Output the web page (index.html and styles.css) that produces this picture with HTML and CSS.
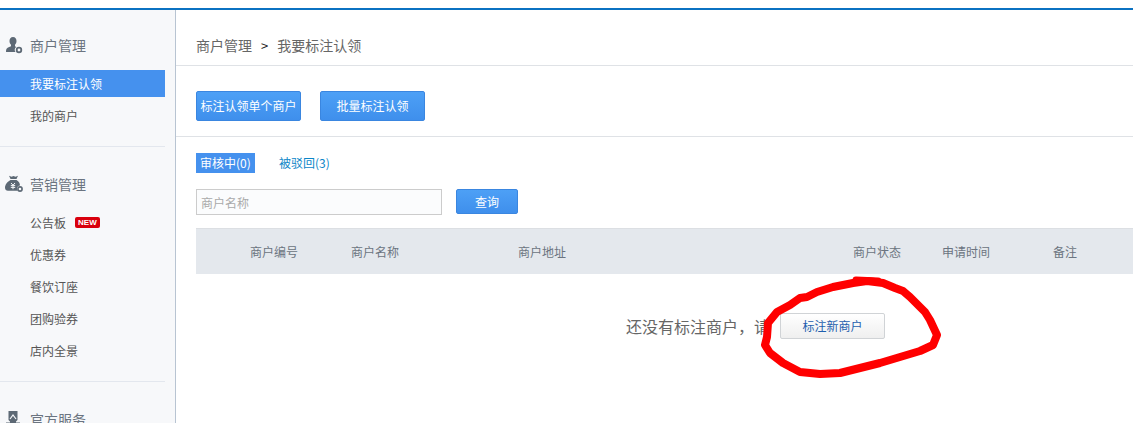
FILE: index.html
```html
<!DOCTYPE html>
<html lang="zh-CN">
<head>
  <meta charset="UTF-8" />
  <title>我要标注认领</title>
  <link rel="stylesheet" href="styles.css">
</head>
<body>

<div class="page">
  <div class="sidebar">
    <div class="side-group">
      <div class="side-title">
        <svg class="side-icon" viewBox="0 0 18 18"><path d="M8 1c2.300 0 3.500 1.700 3.500 4 0 1.700-.7 3-1.500 3.800v1.400l1.200.7a3.500 3.500 0 0 0-.7 5.100H1c0-2.500.5-3.700 2-4.400l3-1.400V8.800C5.200 8 4.500 6.700 4.500 5 4.500 2.700 5.700 1 8 1z"/><circle cx="14" cy="14" r="2.300" fill="none" stroke="#5d6975" stroke-width="1.800"/></svg>
        商户管理
      </div>
      <a class="side-item active">我要标注认领</a>
      <a class="side-item">我的商户</a>
    </div>
    <div class="side-group">
      <div class="side-title">
        <svg class="side-icon" viewBox="0 0 18 18"><path d="M4 .8l2.500 1 2-.8 2 .8 2.500-1-1.500 3.200H5.500zM5.500 5h6c2.500 1.500 3.500 3.500 3.500 5.500-1.600 0-3 1.400-3 3 0 .9.300 1.600.9 2.300H3c-1.700 0-3-1.100-3-3 0-3.300 2.500-6.300 5.500-7.800z"/><circle cx="15" cy="14" r="2.100" fill="none" stroke="#5d6975" stroke-width="1.600"/><path d="M6 8l2 2.200L10 8M5.800 10.600h4.400M5.800 12.400h4.400M8 10.200v4" fill="none" stroke="#f7f8fa" stroke-width="1"/></svg>
        营销管理
      </div>
      <a class="side-item">公告板<span class="new-tag">NEW</span></a>
      <a class="side-item">优惠券</a>
      <a class="side-item">餐饮订座</a>
      <a class="side-item">团购验券</a>
      <a class="side-item">店内全景</a>
    </div>
    <div class="side-group">
      <div class="side-title">
        <svg class="side-icon" viewBox="0 0 18 18"><path d="M3.500 1h9v9l-1.500 1.500v1h4V16H1v-3.500h4v-1L3.500 10z"/><path d="M5 9l3-4 3 4" fill="none" stroke="#f7f8fa" stroke-width="1.200"/></svg>
        官方服务
      </div>
    </div>
  </div>

  <div class="main">
    <div class="crumb">
      <span>商户管理</span><span class="crumb-sep">&gt;</span><span>我要标注认领</span>
    </div>
    <div class="toolbar">
      <a class="btn-blue">标注认领单个商户</a>
      <a class="btn-blue">批量标注认领</a>
    </div>
    <div class="body-area">
      <div class="tabs">
        <a class="tab current">审核中(0)</a>
        <a class="tab">被驳回(3)</a>
      </div>
      <div class="search-row">
        <input class="search-input" type="text" placeholder="商户名称">
        <a class="btn-query">查询</a>
      </div>
      <div class="table-head">
        <span>商户编号</span>
        <span>商户名称</span>
        <span>商户地址</span>
        <span>商户状态</span>
        <span>申请时间</span>
        <span>备注</span>
      </div>
      <div class="empty">
        <span class="empty-text">还没有标注商户<span class="punct">，</span>请</span>
        <a class="btn-new">标注新商户</a>
      </div>
    </div>
  </div>
</div>

<!-- hand-drawn marker over the screenshot -->
<svg class="scribble" viewBox="0 0 1133 423">
  <path d="M767 337L768 323L777 312L790 305L800 298L807 297L817 292L833 287L853 283L867 281L883 283L895 288L903 291L910 297L920 307L925 312L930 320L937 335L933 345L920 351L900 357L880 363L860 368L840 373L820 374L800 372L783 363L770 353L765 345z"/>
  <path class="scribble-thick" d="M856 280L878 281"/>
</svg>

</body>
</html>
```

FILE: styles.css
```css
html, body {
  margin: 0;
  padding: 0;
  height: 423px;
  overflow: hidden;
  background: #fff;
  font-family: "Noto Sans CJK SC", "Liberation Sans", sans-serif;
  font-size: 12px;
  color: #555;
}
.page {
  display: flex;
  margin-top: 8px;
  border-top: 2px solid #0b72c2;
  height: 413px;
}
.sidebar {
  flex: none;
  width: 175px;
  box-sizing: content-box;
  background: #f7f8fa;
  border-right: 1px solid #b8c4d2;
  overflow: hidden;
}
.side-group {
  width: 165px;
  padding: 22px 0 14px;
  border-bottom: 1px solid #e3e7ee;
}
.side-group:first-child {
  padding-top: 20px;
}
.side-group:last-child {
  border-bottom: none;
}
.side-title {
  box-sizing: border-box;
  display: flex;
  align-items: center;
  height: 32px;
  margin-bottom: 6px;
  padding: 0 0 2px 5px;
  font-size: 14px;
  color: #6b7480;
}
.side-icon {
  width: 18px;
  height: 18px;
  margin-right: 7px;
  fill: #5d6975;
}
.side-item {
  box-sizing: border-box;
  display: flex;
  align-items: center;
  height: 32px;
  padding: 0 0 2px 30px;
  color: #555;
}
.side-item.active {
  height: 27px;
  margin: 8px 0 3px;
  padding-bottom: 0;
  background: #4591ee;
  color: #fff;
}
.new-tag {
  margin-left: 9px;
  padding: 0 3px;
  height: 11px;
  line-height: 11px;
  background: #d9000d;
  border-radius: 2px;
  color: #fff;
  font-size: 8px;
  font-weight: bold;
  font-family: "Liberation Sans", sans-serif;
}
.main {
  flex: 1;
  min-width: 0;
}
.crumb {
  display: flex;
  align-items: center;
  height: 20px;
  padding: 25px 0 10px 20px;
  border-bottom: 1px solid #dfe2e6;
  font-size: 14px;
  color: #666;
}
.crumb span:first-child {
  width: 56px;
}
.crumb-sep {
  margin: 0 9px 0 9px;
  color: #222;
  font-size: 13px;
}
.toolbar {
  display: flex;
  gap: 19px;
  padding: 25px 0 15px 20px;
  border-bottom: 1px solid #dfe2e6;
}
.btn-blue {
  width: 103px;
  height: 28px;
  line-height: 28px;
  text-align: center;
  border: 1px solid #3a86e0;
  border-radius: 2px;
  background: linear-gradient(#4da0f6, #3f8fec);
  color: #fff;
}
.body-area {
  padding: 16px 0 0 20px;
}
.tabs {
  display: flex;
  gap: 24px;
  height: 20px;
}
.tab {
  line-height: 20px;
  color: #0b86c8;
}
.tab.current {
  width: 55px;
  padding-left: 4px;
  background: #4591ee;
  color: #fff;
}
.search-row {
  display: flex;
  gap: 14px;
  margin-top: 16px;
}
.search-input {
  box-sizing: border-box;
  width: 246px;
  height: 26px;
  padding: 0 4px;
  border: 1px solid #ccc;
  background: #fbfcfd;
  font: 12px "Noto Sans CJK SC", sans-serif;
}
.search-input::placeholder {
  color: #aaa;
}
.btn-query {
  width: 60px;
  height: 23px;
  line-height: 23px;
  text-align: center;
  border: 1px solid #3a86e0;
  border-radius: 2px;
  background: linear-gradient(#4da0f6, #3f8fec);
  color: #fff;
}
.table-head {
  display: grid;
  grid-template-columns: 101px 167px 335px 89px 111px 1fr;
  align-items: center;
  height: 45px;
  margin-top: 13px;
  padding-left: 54px;
  background: #e4e8ed;
  border-top: 1px solid #dcdfe3;
  color: #6b7480;
}
.empty {
  display: flex;
  align-items: center;
  height: 26px;
  margin-top: 39px;
  padding-left: 430px;
}
.empty-text {
  width: 154px;
  font-size: 16px;
  color: #666;
}
.punct {
  font-family: "Noto Sans CJK TC", sans-serif;
}
.btn-new {
  box-sizing: border-box;
  width: 105px;
  height: 26px;
  line-height: 24px;
  text-align: center;
  border: 1px solid #d0d3d6;
  border-radius: 2px;
  background: linear-gradient(#fff, #efefef);
  color: #1f5fae;
}
.scribble {
  position: absolute;
  left: 0;
  top: 0;
  width: 1133px;
  height: 423px;
  pointer-events: none;
}
.scribble path {
  fill: none;
  stroke: #ff0000;
  stroke-width: 8;
  stroke-linejoin: round;
  stroke-linecap: round;
}
.scribble .scribble-thick {
  stroke-width: 7;
}
```
